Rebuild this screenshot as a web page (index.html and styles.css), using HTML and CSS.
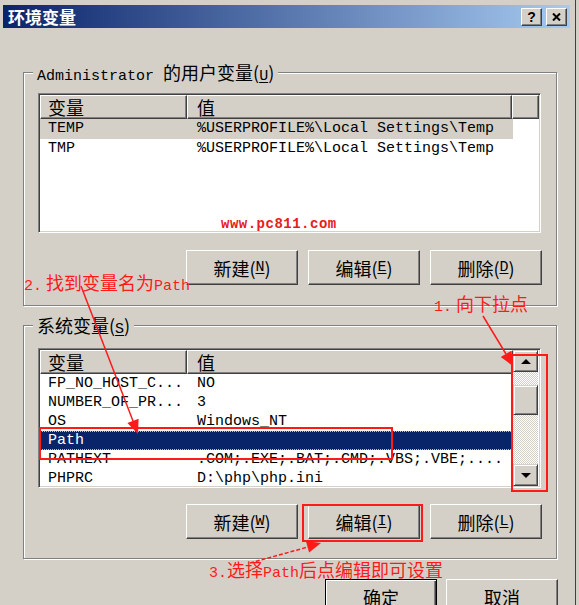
FILE: index.html
```html
<!DOCTYPE html>
<html lang="zh-CN">
<head>
<meta charset="utf-8">
<title>环境变量</title>
<link rel="stylesheet" href="styles.css">
</head>
<body>
<div class="window">
  <div class="titlebar">
    <span class="title">环境变量</span>
    <div class="tbtns">
      <span class="tbtn q">?</span>
      <span class="tbtn x"><svg width="9" height="8" viewBox="0 0 9 8"><path d="M1 0.5 L8 7.5 M8 0.5 L1 7.5" stroke="#000" stroke-width="2"/></svg></span>
    </div>
  </div>
  <div class="main">
    <div class="group user">
      <div class="legend"><span class="m">Administrator </span>的用户变量(<u class="m">U</u>)</div>
      <div class="list ulist">
        <div class="lhead">
          <div class="hc c1">变量</div>
          <div class="hc c2">值</div>
          <div class="hc c3"></div>
        </div>
        <div class="row dim m"><span class="c1">TEMP</span><span class="c2">%USERPROFILE%\Local Settings\Temp</span></div>
        <div class="row m"><span class="c1">TMP</span><span class="c2">%USERPROFILE%\Local Settings\Temp</span></div>
      </div>
      <div class="btns">
        <div class="btn">新建(<u class="m">N</u>)</div>
        <div class="btn">编辑(<u class="m">E</u>)</div>
        <div class="btn">删除(<u class="m">D</u>)</div>
      </div>
    </div>
    <div class="group sys">
      <div class="legend">系统变量(<u class="m">S</u>)</div>
      <div class="list slist">
        <div class="lmain">
          <div class="lhead">
            <div class="hc c1">变量</div>
            <div class="hc c2">值</div>
          </div>
          <div class="row m"><span class="c1">FP_NO_HOST_C...</span><span class="c2">NO</span></div>
          <div class="row m"><span class="c1">NUMBER_OF_PR...</span><span class="c2">3</span></div>
          <div class="row m"><span class="c1">OS</span><span class="c2">Windows_NT</span></div>
          <div class="row sel m"><span class="c1">Path</span><span class="c2"></span></div>
          <div class="row m"><span class="c1">PATHEXT</span><span class="c2">.COM;.EXE;.BAT;.CMD;.VBS;.VBE;....</span></div>
          <div class="row m"><span class="c1">PHPRC</span><span class="c2">D:\php\php.ini</span></div>
        </div>
        <div class="vscroll">
          <div class="sbtn"><span class="tri up"></span></div>
          <div class="track t1"></div>
          <div class="thumb"></div>
          <div class="track t2"></div>
          <div class="sbtn"><span class="tri down"></span></div>
        </div>
      </div>
      <div class="btns sbtns">
        <div class="btn">新建(<u class="m">W</u>)</div>
        <div class="btn">编辑(<u class="m">I</u>)</div>
        <div class="btn">删除(<u class="m">L</u>)</div>
      </div>
    </div>
    <div class="okrow">
      <div class="btn def">确定</div>
      <div class="btn">取消</div>
    </div>
  </div>
</div>

<div class="wm">www.pc811.com</div>
<div class="note n2"><span class="m">2.</span> 找到变量名为<span class="m">Path</span></div>
<div class="note n1"><span class="m">1.</span> 向下拉点</div>
<div class="note n3"><span class="m">3.</span>选择<span class="m">Path</span>后点编辑即可设置</div>

<svg class="annot" width="579" height="605" viewBox="0 0 579 605">
  <g fill="none" stroke="#ff1a1a" stroke-width="2">
    <rect x="40" y="428" width="352" height="31"/>
    <rect x="512" y="355" width="35" height="136"/>
    <rect x="303" y="505" width="119" height="36"/>
  </g>
  <g stroke="#ff1a1a" stroke-width="1.5" fill="none">
    <line x1="483" y1="316" x2="506" y2="354"/>
    <line x1="81" y1="286" x2="133" y2="421"/>
    <line x1="250" y1="563" x2="308" y2="547" stroke-dasharray="4 2"/>
  </g>
  <g fill="#ff1a1a">
    <polygon points="513,366 500.7,357.1 510.9,350.9"/>
    <polygon points="138,434 127.4,423.1 138.6,418.7"/>
    <polygon points="321,543 309.1,552.6 305.9,541"/>
  </g>
</svg>
</body>
</html>
```

FILE: styles.css
```css
* { box-sizing: border-box; margin: 0; padding: 0; }
html, body { width: 579px; height: 605px; overflow: hidden; }
body {
  background: #d4d0c8;
  font-family: "Noto Sans CJK SC", sans-serif;
  font-size: 18px;
  color: #000;
  position: relative;
}
.m { font-family: "Liberation Mono", "Noto Sans CJK SC", monospace; font-size: 15px; }
u { text-decoration: underline; text-underline-offset: 2px; }

.window {
  width: 576px;
  height: 605px;
  padding: 5px 0 0 3px;
  border-right: 1px solid #404040;
}

.titlebar {
  width: 567px;
  height: 23px;
  background: linear-gradient(to right, #0a246a, #a6caf0);
  display: flex;
  align-items: center;
  justify-content: space-between;
  padding: 0 3px 0 5px;
}
.title { color: #fff; font-weight: bold; font-size: 17px; line-height: 23px; }
.tbtns { display: flex; gap: 4px; }
.tbtn {
  width: 21px; height: 18px;
  background: #d4d0c8;
  border: 1px solid;
  border-color: #fff #404040 #404040 #fff;
  box-shadow: inset -1px -1px #808080;
  display: flex; align-items: center; justify-content: center;
  font: bold 14px/16px "Liberation Sans", sans-serif;
}

.main { padding-left: 20px; }

.group {
  width: 534px;
  height: 234px;
  border: 1px solid #808080;
  box-shadow: inset 1px 1px #fff, 1px 1px #fff;
}
.group.user { margin-top: 44px; }
.group.sys { margin-top: 19px; }

.legend {
  width: max-content;
  margin: -10px 0 0 9px;
  padding: 0 4px;
  background: #d4d0c8;
  height: 18px;
  line-height: 18px;
  white-space: pre;
}
.legend .m { line-height: 18px; }

.list {
  margin: 12px 0 0 14px;
  width: 503px;
  height: 140px;
  background: #fff;
  border: 1px solid;
  border-color: #808080 #fff #fff #808080;
  box-shadow: inset 1px 1px #404040, inset -1px -1px #d4d0c8;
  padding: 1px;
  overflow: hidden;
}
.slist { margin-top: 14px; display: flex; }
.lmain { width: 473px; }

.lhead { display: flex; height: 24px; }
.hc {
  height: 24px;
  background: #d4d0c8;
  border: 1px solid;
  border-color: #fff #404040 #404040 #fff;
  box-shadow: inset -1px -1px #808080;
  line-height: 22px;
  padding-left: 7px;
}
.hc.c1 { width: 147px; }
.hc.c2 { width: 325px; padding-left: 9px; }
.slist .hc.c2 { width: 326px; }
.hc.c3 { flex: 1; }

.row {
  display: flex;
  width: 473px;
  height: 20px;
  line-height: 20px;
  white-space: pre;
}
.slist .row { height: 19px; line-height: 19px; }
.row .c1 { width: 147px; padding-left: 8px; }
.row .c2 { padding-left: 10px; }
.row.dim { background: #d4d0c8; }
.row.sel {
  background: #0a246a;
  color: #fff;
  outline: 1px dotted #d8c078;
  outline-offset: -1px;
}

.vscroll { width: 25px; display: flex; flex-direction: column; }
.sbtn, .thumb {
  background: #d4d0c8;
  border: 1px solid;
  border-color: #d4d0c8 #404040 #404040 #d4d0c8;
  box-shadow: inset 1px 1px #fff, inset -1px -1px #808080;
}
.sbtn { height: 22px; display: flex; align-items: center; justify-content: center; }
.thumb { height: 30px; }
.track { background: repeating-conic-gradient(#fff 0 25%, #d4d0c8 0 50%) 0 0 / 2px 2px; }
.t1 { height: 13px; }
.t2 { flex: 1; }
.tri { width: 0; height: 0; border-left: 5px solid transparent; border-right: 5px solid transparent; }
.tri.up { border-bottom: 5px solid #000; }
.tri.down { border-top: 5px solid #000; }

.btns {
  display: flex;
  justify-content: flex-end;
  gap: 10px;
  margin-top: 17px;
  padding-right: 14px;
}
.sbtns { margin-top: 16px; }
.btn {
  width: 112px;
  height: 35px;
  background: #d4d0c8;
  border: 1px solid;
  border-color: #fff #404040 #404040 #fff;
  box-shadow: inset -1px -1px #808080;
  display: flex;
  align-items: center;
  justify-content: center;
  line-height: 20px;
  white-space: pre;
}
.btn .m { line-height: 20px; }
.btn.def {
  border: 1px solid #000;
  box-shadow: inset 1px 1px #fff, inset -1px -1px #404040, inset -2px -2px #808080;
}

.okrow {
  width: 535px;
  display: flex;
  justify-content: flex-end;
  gap: 9px;
  margin-top: 20px;
}

.wm {
  position: absolute;
  left: 221px;
  top: 215px;
  font: bold 14px/18px "Liberation Mono", monospace;
  letter-spacing: 0.5px;
  color: #e62020;
}
.note {
  position: absolute;
  color: #ff1a1a;
  line-height: 20px;
  white-space: pre;
}
.note .m { line-height: 20px; }
.n2 { left: 24px; top: 272px; }
.n1 { left: 434px; top: 293px; }
.n3 { left: 209px; top: 559px; }

.annot { position: absolute; left: 0; top: 0; pointer-events: none; }
```
